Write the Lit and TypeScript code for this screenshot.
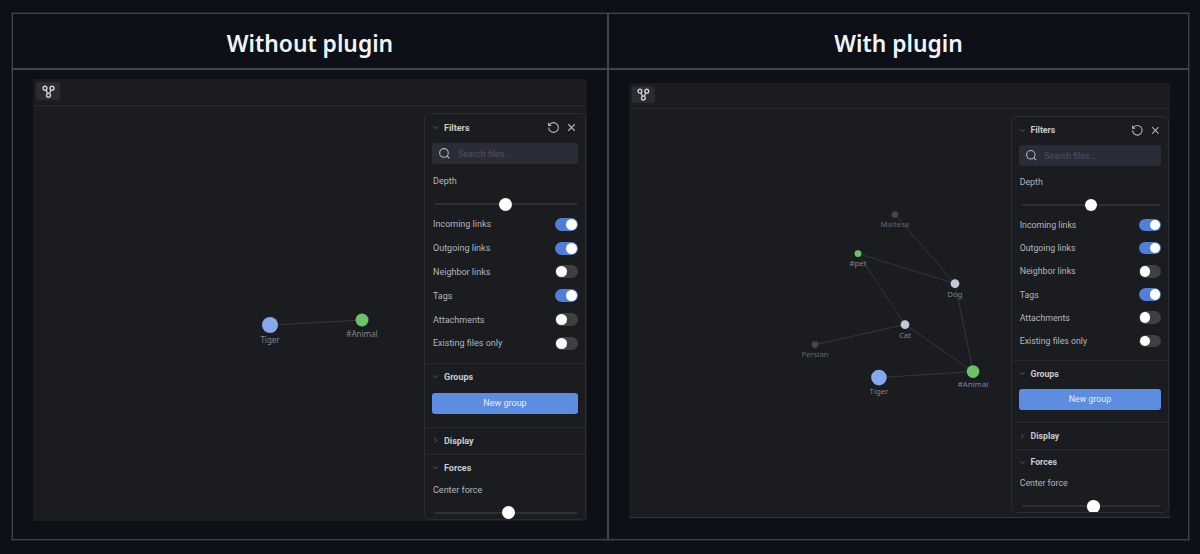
import { LitElement, html, css, svg } from "lit";
import { customElement, property } from "lit/decorators.js";

type GraphNode = { id: string; label: string; x: number; y: number; r: number; color: string; dim?: boolean };

const FILTERS = [
  { label: "Incoming links", on: true },
  { label: "Outgoing links", on: true },
  { label: "Neighbor links", on: false },
  { label: "Tags", on: true },
  { label: "Attachments", on: false },
  { label: "Existing files only", on: false },
];

const WITHOUT_NODES: GraphNode[] = [
  { id: "tiger", label: "Tiger", x: 237, y: 219, r: 8, color: "#87a9ec" },
  { id: "animal", label: "#Animal", x: 329, y: 214, r: 6.5, color: "#6cc16a" },
];
const WITHOUT_EDGES = [["tiger", "animal"]];

const WITH_NODES: GraphNode[] = [
  { id: "maltese", label: "Maltese", x: 272.5, y: 108.2, r: 3.5, color: "#44474d", dim: true },
  { id: "pet", label: "#pet", x: 234.6, y: 148.1, r: 3.5, color: "#6cc16a" },
  { id: "dog", label: "Dog", x: 334, y: 178.9, r: 4.5, color: "#c5c8d6" },
  { id: "cat", label: "Cat", x: 282.8, y: 220.9, r: 4.5, color: "#c5c8d6" },
  { id: "persian", label: "Persian", x: 190.6, y: 241.4, r: 3.5, color: "#44474d", dim: true },
  { id: "tiger", label: "Tiger", x: 256.1, y: 275.2, r: 8, color: "#87a9ec" },
  { id: "animal", label: "#Animal", x: 352.5, y: 269, r: 6.5, color: "#6cc16a" },
];
const WITH_EDGES = [
  ["maltese", "dog"],
  ["pet", "dog"],
  ["pet", "cat"],
  ["cat", "persian"],
  ["cat", "animal"],
  ["dog", "animal"],
  ["tiger", "animal"],
];

const chevronDown = html`<svg class="chev" viewBox="0 0 24 24"><path d="m6 9 6 6 6-6" /></svg>`;
const chevronRight = html`<svg class="chev" viewBox="0 0 24 24"><path d="m9 6 6 6-6 6" /></svg>`;

@customElement("graph-view")
class GraphView extends LitElement {
  static styles = css`
    :host {
      display: block;
      font-family: Roboto, "Noto Sans", sans-serif;
    }
    .window {
      height: 442px;
      background: #1a1c20;
      display: flex;
      flex-direction: column;
      overflow: hidden;
    }
    .toolbar {
      height: 23px;
      flex: none;
      border-bottom: 1px solid #26282c;
      padding: 3px 0 0 3px;
    }
    .tab {
      width: 24px;
      height: 18px;
      border-radius: 3px;
      background: #2a2c30;
      display: flex;
      align-items: center;
      justify-content: center;
    }
    .tab svg {
      width: 13px;
      height: 13px;
      fill: none;
      stroke: #d0d2d6;
      stroke-width: 2.6;
    }
    .canvas {
      position: relative;
      flex: 1;
    }
    .canvas > svg {
      position: absolute;
      inset: 0;
      width: 100%;
      height: 100%;
    }
    .edge {
      stroke: #34363a;
      stroke-width: 1;
    }
    .node-label {
      font-family: "Noto Sans", sans-serif;
      font-size: 8px;
      fill: #82848a;
      text-anchor: middle;
    }
    .node-label.dim {
      fill: #63656a;
    }
    .panel {
      position: absolute;
      top: 7px;
      right: 1px;
      width: 162px;
      height: 407px;
      box-sizing: border-box;
      border: 1px solid #2b2d31;
      border-radius: 6px;
      background: #1a1c20;
      overflow: hidden;
      color: #b4b6ba;
      font-size: 9px;
    }
    section {
      padding: 0 7px;
      border-bottom: 1px solid #26282c;
    }
    section:last-child {
      border-bottom: 0;
    }
    .head {
      height: 26px;
      display: flex;
      align-items: center;
      gap: 4px;
      font-weight: 700;
      color: #c8cacd;
    }
    .first {
      height: 27px;
    }
    .chev {
      width: 9px;
      height: 9px;
      margin-left: -1px;
      fill: none;
      stroke: #62646a;
      stroke-width: 2.4;
      flex: none;
    }
    .actions {
      margin-left: auto;
      display: flex;
      gap: 5px;
    }
    .actions svg {
      width: 13px;
      height: 13px;
      fill: none;
      stroke: #b4b6ba;
      stroke-width: 2;
    }
    .search {
      height: 21px;
      margin-top: 2px;
      border-radius: 3px;
      background: #2a2d38;
      display: flex;
      align-items: center;
      gap: 7px;
      padding-left: 6px;
      color: #4f535e;
    }
    .search svg {
      width: 13px;
      height: 13px;
      fill: none;
      stroke: #b4b6ba;
      stroke-width: 2;
    }
    .field {
      height: 16px;
      line-height: 16px;
      padding-left: 1px;
    }
    .depth {
      margin-top: 9px;
    }
    .force {
      margin-top: 1px;
    }
    .slider {
      position: relative;
      height: 16px;
      margin: 7px 1px 0 3px;
    }
    .slider::before {
      content: "";
      position: absolute;
      left: 0;
      right: 0;
      top: 7px;
      height: 2px;
      background: #2e3034;
    }
    .thumb {
      position: absolute;
      top: 1.5px;
      width: 13px;
      height: 13px;
      margin-left: -6.5px;
      border-radius: 50%;
      background: #fff;
    }
    .rows {
      padding: 0.5px 0 7.5px;
    }
    .row {
      height: 23.8px;
      display: flex;
      align-items: center;
      justify-content: space-between;
      padding-left: 1px;
    }
    .toggle {
      width: 23px;
      height: 13px;
      border-radius: 7px;
      background: #404040;
      display: flex;
      align-items: center;
      padding: 0 1px;
      box-sizing: border-box;
    }
    .toggle.on {
      background: #4f7fd9;
      justify-content: flex-end;
    }
    .toggle i {
      width: 11px;
      height: 11px;
      border-radius: 50%;
      background: #fff;
    }
    .new-group {
      height: 21px;
      margin: 3px 0 13px;
      border-radius: 3px;
      background: #5c8de0;
      color: #e8eefb;
      display: flex;
      align-items: center;
      justify-content: center;
    }
    :host(.compact) .window {
      zoom: 0.976;
      height: 444.7px;
      border-bottom: 1px solid #34373b;
    }
  `;

  @property({ type: Array }) nodes: GraphNode[] = [];
  @property({ type: Array }) edges: string[][] = [];
  @property({ type: Number }) depth = 50;
  @property({ type: Number }) center = 50;
  @property({ type: Number }) labelGap = 10;

  private renderGraph() {
    const at = (id: string) => this.nodes.find((n) => n.id === id)!;
    return html`<svg>
      ${this.edges.map(([a, b]) => {
        const p = at(a);
        const q = at(b);
        return svg`<line class="edge" x1=${p.x} y1=${p.y} x2=${q.x} y2=${q.y}></line>`;
      })}
      ${this.nodes.map(
        (n) => svg`
          <circle cx=${n.x} cy=${n.y} r=${n.r} fill=${n.color}></circle>
          <text class="node-label ${n.dim ? "dim" : ""}" x=${n.x} y=${n.y + n.r + this.labelGap}>${n.label}</text>`
      )}
    </svg>`;
  }

  render() {
    return html`
      <div class="window">
        <div class="toolbar">
          <div class="tab">
            <svg viewBox="0 0 24 24">
              <circle cx="5.5" cy="6" r="3.6" />
              <circle cx="18.5" cy="6" r="3.6" />
              <circle cx="12" cy="19" r="3.6" />
              <path d="M7.5 9.5l2.8 6M16.5 9.5l-2.8 6" />
            </svg>
          </div>
        </div>
        <div class="canvas">
          ${this.renderGraph()}
          <div class="panel">
            <section>
              <div class="head first">
                ${chevronDown}<span>Filters</span>
                <div class="actions">
                  <svg viewBox="0 0 24 24">
                    <path d="M3 12a9 9 0 1 0 9-9 9.75 9.75 0 0 0-6.74 2.74L3 8" />
                    <path d="M3 3v5h5" />
                  </svg>
                  <svg viewBox="0 0 24 24"><path d="M18 6 6 18M6 6l12 12" /></svg>
                </div>
              </div>
              <div class="search">
                <svg viewBox="0 0 24 24">
                  <circle cx="11" cy="11" r="8" />
                  <path d="m21 21-4.3-4.3" />
                </svg>
                <span>Search files...</span>
              </div>
              <div class="field depth">Depth</div>
              <div class="slider"><div class="thumb" style="left:${this.depth}%"></div></div>
              <div class="rows">
                ${FILTERS.map(
                  (f) => html`<div class="row">
                    <span>${f.label}</span>
                    <div class="toggle ${f.on ? "on" : ""}"><i></i></div>
                  </div>`
                )}
              </div>
            </section>
            <section>
              <div class="head">${chevronDown}<span>Groups</span></div>
              <div class="new-group">New group</div>
            </section>
            <section>
              <div class="head">${chevronRight}<span>Display</span></div>
            </section>
            <section>
              <div class="head">${chevronDown}<span>Forces</span></div>
              <div class="field force">Center force</div>
              <div class="slider"><div class="thumb" style="left:${this.center}%"></div></div>
            </section>
          </div>
        </div>
      </div>
    `;
  }
}

@customElement("app-root")
class AppRoot extends LitElement {
  static styles = css`
    :host {
      display: block;
      min-height: 554px;
      background: #0d1117;
      padding: 13px 0 0 12px;
      box-sizing: border-box;
    }
    .table {
      width: 1177px;
      height: 527px;
      box-sizing: border-box;
      border: 1px solid #3d444d;
      outline: 1px solid rgba(61, 68, 77, 0.4);
      display: grid;
      grid-template-columns: 596px 1fr;
      grid-template-rows: 56px 1fr;
      font-family: "Noto Sans", sans-serif;
    }
    .title {
      display: flex;
      align-items: center;
      justify-content: center;
      padding-top: 4px;
      box-sizing: border-box;
      font-size: 22.8px;
      font-weight: 600;
      color: #f0f6fc;
      border-bottom: 2px solid #3d444d;
    }
    .left {
      border-right: 2px solid #3d444d;
    }
    .cell-a {
      padding: 9px 20px 0 20px;
    }
    .cell-b {
      padding: 13px 18px 0 20px;
    }
  `;

  render() {
    return html`
      <div class="table">
        <div class="title left">Without plugin</div>
        <div class="title">With plugin</div>
        <div class="left cell-a">
          <graph-view .nodes=${WITHOUT_NODES} .edges=${WITHOUT_EDGES} .depth=${49.5} .center=${51.5}></graph-view>
        </div>
        <div class="cell-b">
          <graph-view class="compact" .labelGap=${9} .nodes=${WITH_NODES} .edges=${WITH_EDGES} .depth=${50} .center=${52}></graph-view>
        </div>
      </div>
    `;
  }
}
